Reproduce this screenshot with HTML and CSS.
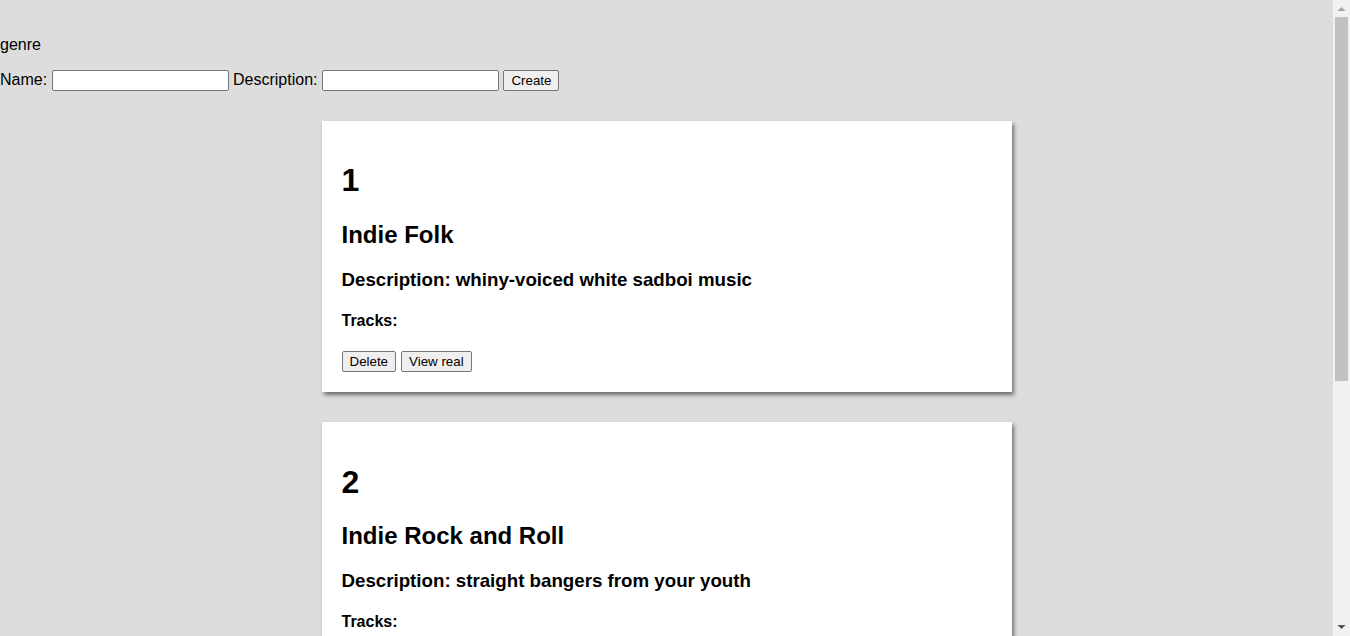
FILE: index.html
```html
<!DOCTYPE html>
<html>
<head>
<meta charset="utf-8">
<title>genre</title>
<link rel="stylesheet" href="styles.css">
</head>
<body>
<div class="title">genre</div>
<form class="create-form">
  <label>Name: <input type="text" class="field"></label>
  <label>Description: <input type="text" class="field"></label>
  <button type="button" class="btn">Create</button>
</form>
<div class="list">
  <div class="card">
    <h1>1</h1>
    <h2>Indie Folk</h2>
    <h3>Description: whiny-voiced white sadboi music</h3>
    <h4>Tracks:</h4>
    <div class="actions">
      <button type="button" class="btn">Delete</button>
      <button type="button" class="btn">View real</button>
    </div>
  </div>
  <div class="card">
    <h1>2</h1>
    <h2>Indie Rock and Roll</h2>
    <h3>Description: straight bangers from your youth</h3>
    <h4>Tracks:</h4>
    <div class="actions">
      <button type="button" class="btn">Delete</button>
      <button type="button" class="btn">View real</button>
    </div>
  </div>
  <div class="card">
    <h1>3</h1>
    <h2>Dream Pop</h2>
    <h3>Description: hazy reverb for rainy afternoons</h3>
    <h4>Tracks:</h4>
    <div class="actions">
      <button type="button" class="btn">Delete</button>
      <button type="button" class="btn">View real</button>
    </div>
  </div>
</div>
<div class="scrollbar" aria-hidden="true">
  <div class="sb-arrow">
    <svg width="9" height="5" viewBox="0 0 9 5"><polygon points="0.5,5 4.5,1 8.5,5" fill="#a3a3a3"/></svg>
  </div>
  <div class="sb-track"><div class="sb-thumb"></div></div>
  <div class="sb-arrow">
    <svg width="9" height="5" viewBox="0 0 9 5"><polygon points="0.5,0 8.5,0 4.5,4" fill="#505050"/></svg>
  </div>
</div>
</body>
</html>
```
FILE: styles.css
```css
html {
  background: #dddddd;
}
body {
  margin: 0 17px 0 0;
  font-family: "Liberation Sans", Arial, sans-serif;
  font-size: 16px;
  color: #000;
}
.title {
  padding-top: 36px;
  line-height: 18px;
}
.create-form {
  margin: 15px 0 0;
  line-height: 22px;
}
.field {
  box-sizing: border-box;
  width: 177px;
  height: 21px;
  border: 1px solid #767676;
  border-radius: 2px;
  padding: 1px 2px;
  font-family: "Liberation Sans", Arial, sans-serif;
  font-size: 13.33px;
  background: #fff;
  vertical-align: baseline;
}
.btn {
  box-sizing: border-box;
  height: 21px;
  border: 1px solid #767676;
  border-radius: 2px;
  background: #efefef;
  padding: 1px 7px;
  font-family: "Liberation Sans", Arial, sans-serif;
  font-size: 13.33px;
  color: #000;
}
.list {
  padding-bottom: 30px;
}
.card {
  width: 690px;
  box-sizing: border-box;
  margin: 30px auto 0;
  padding: 20px;
  background: #fff;
  box-shadow: 2px 3px 4px #6e6e6e;
}
.card h1 {
  font-size: 32px;
  margin: 21.44px 0;
}
.card h2 {
  font-size: 24px;
  margin: 19.92px 0;
}
.card h3 {
  font-size: 18.72px;
  margin: 18.72px 0;
}
.card h4 {
  font-size: 16px;
  margin: 21.28px 0;
}
.actions {
  display: flex;
  gap: 5px;
}
.scrollbar {
  position: fixed;
  top: 0;
  right: 0;
  width: 17px;
  height: 100vh;
  background: #f1f1f1;
  display: flex;
  flex-direction: column;
}
.sb-arrow {
  height: 17px;
  display: flex;
  align-items: center;
  justify-content: center;
  flex: none;
}
.sb-arrow svg {
  display: block;
}
.sb-track {
  flex: 1;
  padding: 0 2px;
}
.sb-thumb {
  height: 364px;
  background: #c1c1c1;
}
```
